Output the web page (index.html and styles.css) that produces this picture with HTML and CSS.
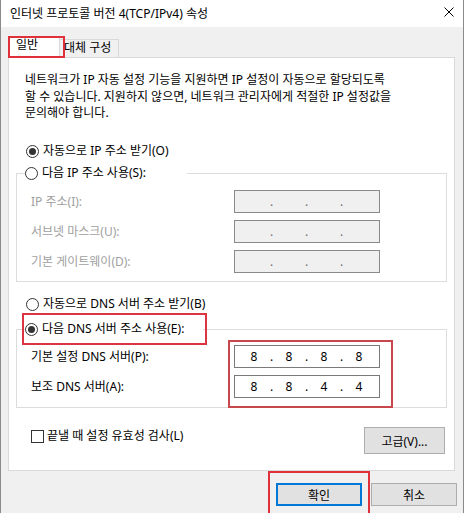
FILE: index.html
```html
<!DOCTYPE html>
<html lang="ko">
<head>
    <meta charset="UTF-8">
    <title>인터넷 프로토콜 버전 4(TCP/IPv4) 속성</title>
    <link rel="stylesheet" href="styles.css">
</head>
<body>
    <div class="window">
        <div class="titlebar">
            <span class="title">인터넷 프로토콜 버전 4(TCP/IPv4) 속성</span>
            <svg class="close" viewBox="0 0 10 10"><path d="M0.5 0.5L9.5 9.5M9.5 0.5L0.5 9.5" stroke="#000" stroke-width="1"/></svg>
        </div>

        <div class="tabs">
            <div class="tab active">일반</div>
            <div class="tab">대체 구성</div>
        </div>

        <div class="panel">
            <p class="desc">네트워크가 IP 자동 설정 기능을 지원하면 IP 설정이 자동으로 할당되도록<br>할 수 있습니다. 지원하지 않으면, 네트워크 관리자에게 적절한 IP 설정값을<br>문의해야 합니다.</p>

            <div class="option auto-ip"><span class="radio checked"></span>자동으로 IP 주소 받기(O)</div>

            <fieldset class="group ip-group">
                <legend class="ip-legend"><span class="option"><span class="radio"></span>다음 IP 주소 사용(S):</span></legend>
                <div class="fields disabled">
                    <div class="labels">
                        <span>IP 주소(I):</span>
                        <span>서브넷 마스크(U):</span>
                        <span>기본 게이트웨이(D):</span>
                    </div>
                    <div class="inputs">
                        <div class="ip"><span class="octet"></span><span class="dot">.</span><span class="octet"></span><span class="dot">.</span><span class="octet"></span><span class="dot">.</span><span class="octet"></span></div>
                        <div class="ip"><span class="octet"></span><span class="dot">.</span><span class="octet"></span><span class="dot">.</span><span class="octet"></span><span class="dot">.</span><span class="octet"></span></div>
                        <div class="ip"><span class="octet"></span><span class="dot">.</span><span class="octet"></span><span class="dot">.</span><span class="octet"></span><span class="dot">.</span><span class="octet"></span></div>
                    </div>
                </div>
            </fieldset>

            <div class="option auto-dns"><span class="radio"></span>자동으로 DNS 서버 주소 받기(B)</div>

            <fieldset class="group dns-group">
                <legend class="dns-legend marked"><span class="option"><span class="radio checked"></span>다음 DNS 서버 주소 사용(E):</span></legend>
                <div class="fields">
                    <div class="labels">
                        <span>기본 설정 DNS 서버(P):</span>
                        <span>보조 DNS 서버(A):</span>
                    </div>
                    <div class="inputs marked">
                        <div class="ip"><span class="octet">8</span><span class="dot">.</span><span class="octet">8</span><span class="dot">.</span><span class="octet">8</span><span class="dot">.</span><span class="octet">8</span></div>
                        <div class="ip"><span class="octet">8</span><span class="dot">.</span><span class="octet">8</span><span class="dot">.</span><span class="octet">4</span><span class="dot">.</span><span class="octet">4</span></div>
                    </div>
                </div>
            </fieldset>

            <div class="check-row">
                <div class="option"><span class="checkbox"></span>끝낼 때 설정 유효성 검사(L)</div>
                <div class="button advanced">고급(V)...</div>
            </div>
        </div>

        <div class="buttons">
            <div class="button ok">확인</div>
            <div class="button">취소</div>
        </div>
    </div>
</body>
</html>
```

FILE: styles.css
```css
* {
    box-sizing: border-box;
}

body {
    margin: 0;
    background-color: #fff;
    font-family: "Noto Sans", "Noto Sans CJK KR", sans-serif;
    font-size: 12px;
    color: #000;
}

.window {
    width: 464px;
    height: 513px;
    background-color: #f0f0f0;
    border-left: 1px solid #8a8a8a;
    border-right: 1px solid #8a8a8a;
}

.titlebar {
    height: 27px;
    background-color: #fff;
    display: flex;
    align-items: center;
    justify-content: space-between;
    padding: 0 9px;
}

.title {
    line-height: 16px;
}

.close {
    width: 10px;
    height: 10px;
    margin-top: -3px;
}

/* tabs */
.tabs {
    height: 30px;
    display: flex;
    align-items: flex-end;
    padding-left: 7px;
}

.tab {
    position: relative;
    width: 59px;
    height: 18px;
    padding-left: 4px;
    line-height: 16px;
    border: 1px solid #d9d9d9;
    border-left: none;
    border-bottom: none;
    background-color: #f0f0f0;
    white-space: nowrap;
}

.tab.active {
    z-index: 1;
    width: 52px;
    height: 22px;
    margin-bottom: -1px;
    padding-left: 7px;
    border-left: 1px solid #d9d9d9;
    background-color: #fff;
}

.tab.active::after {
    content: "";
    position: absolute;
    left: -1px;
    top: -1px;
    width: 53px;
    height: 18px;
    border: 2px solid #e0303a;
}

.panel {
    width: 447px;
    height: 414px;
    margin-left: 7px;
    background-color: #fff;
    border: 1px solid #d9d9d9;
}

.desc {
    margin: 14px 0 0 16px;
    line-height: 16.5px;
    white-space: nowrap;
}

/* radios / checkbox */
.option {
    display: flex;
    align-items: center;
    height: 16px;
    line-height: 16px;
    white-space: nowrap;
}

.panel > .option {
    margin-left: 17px;
}

.auto-ip {
    margin-top: 21.5px;
}

.auto-dns {
    margin-top: 14px;
}

.radio {
    position: relative;
    flex: none;
    width: 13px;
    height: 13px;
    margin-right: 4px;
    border: 1px solid #333;
    border-radius: 50%;
    background-color: #fff;
}

.radio.checked::after {
    content: "";
    position: absolute;
    left: 2px;
    top: 2px;
    width: 7px;
    height: 7px;
    border-radius: 50%;
    background-color: #333;
}

.checkbox {
    flex: none;
    width: 13px;
    height: 13px;
    margin-right: 3px;
    border: 1px solid #333;
    background-color: #fff;
}

/* group boxes */
.group {
    min-width: 0;
    margin: 0 7px;
    padding: 0 0 8px;
    border: 1px solid #dcdcdc;
}

.ip-group {
    margin-top: 6px;
}

.dns-group {
    margin-top: 9px;
    padding-bottom: 9px;
}

legend {
    position: relative;
    margin-left: 8px;
    padding: 0;
}

.ip-legend {
    width: 162px;
}

.dns-legend {
    width: 178px;
}

.dns-legend.marked::after {
    content: "";
    position: absolute;
    left: -3px;
    top: -8px;
    width: 181px;
    height: 28px;
    border: 2px solid #dc3440;
}

.fields {
    display: flex;
    padding-left: 14px;
    margin-top: 9px;
}

.dns-group .fields {
    margin-top: 8px;
}

.labels {
    width: 203px;
    display: flex;
    flex-direction: column;
    gap: 7px;
}

.labels span {
    height: 23px;
    line-height: 23px;
    white-space: nowrap;
}

.inputs {
    position: relative;
    display: flex;
    flex-direction: column;
    gap: 7px;
}

.inputs.marked::after {
    content: "";
    position: absolute;
    left: -6px;
    top: -5px;
    width: 161px;
    height: 64px;
    border: 2px solid #c8464e;
}

.ip {
    width: 146px;
    height: 23px;
    display: flex;
    padding-left: 4px;
    line-height: 21px;
    border: 1px solid #7a7a7a;
    background-color: #fff;
}

.octet {
    width: 30px;
    text-align: center;
}

.dot {
    width: 5px;
    text-align: center;
}

.disabled .labels {
    color: #a0a0a0;
}

.disabled .ip {
    border-color: #8a8a8a;
    background-color: #f0f0f0;
    color: #6d6d6d;
}

/* buttons */
.check-row {
    display: flex;
    align-items: flex-start;
    justify-content: space-between;
    margin-top: 19px;
    padding: 0 9px 0 22px;
}

.check-row .option {
    margin-top: 1px;
}

.button {
    position: relative;
    width: 86px;
    height: 23px;
    display: flex;
    align-items: center;
    justify-content: center;
    border: 1px solid #adadad;
    background-color: #e1e1e1;
    white-space: nowrap;
}

.button.advanced {
    width: 81px;
    height: 27px;
}

.buttons {
    display: flex;
    justify-content: flex-end;
    gap: 9px;
    margin-top: 12px;
    padding-right: 6px;
}

.button.ok {
    border: 2px solid #0078d7;
}

.button.ok::after {
    content: "";
    position: absolute;
    left: -10px;
    top: -14px;
    width: 98px;
    height: 42px;
    border: 2px solid #e0303a;
}
```
